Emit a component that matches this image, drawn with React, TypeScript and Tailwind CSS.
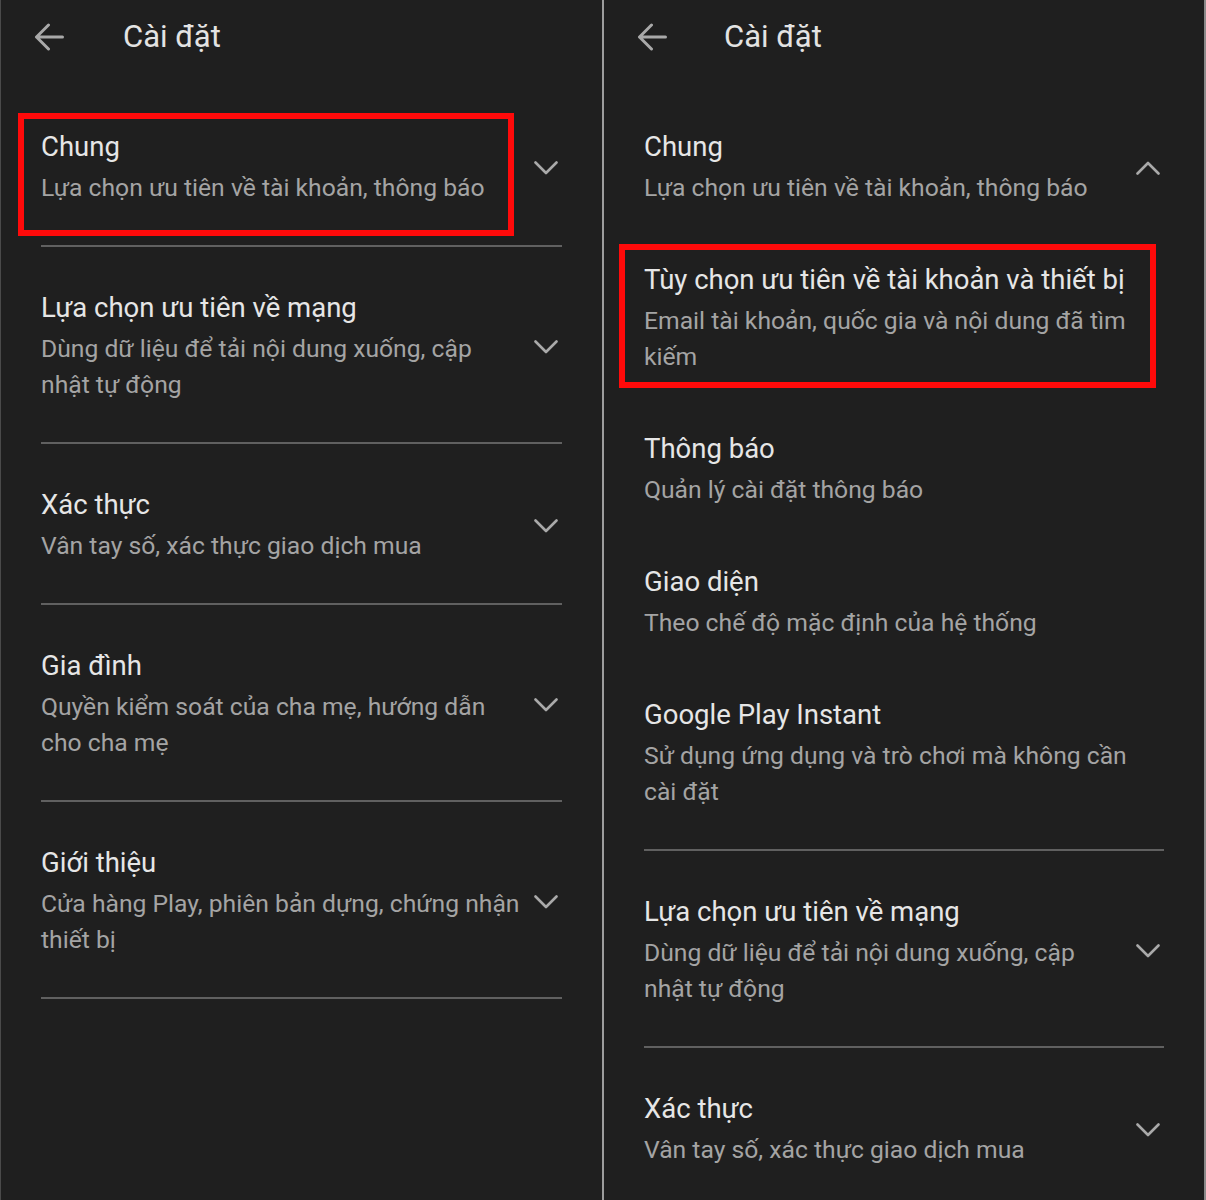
import React from "react";

type Entry = {
  title: string;
  sub: string[];
};

type Section = Entry & {
  expanded?: boolean;
  children?: Entry[];
};

const leftSections: Section[] = [
  { title: "Chung", sub: ["Lựa chọn ưu tiên về tài khoản, thông báo"] },
  {
    title: "Lựa chọn ưu tiên về mạng",
    sub: ["Dùng dữ liệu để tải nội dung xuống, cập", "nhật tự động"],
  },
  { title: "Xác thực", sub: ["Vân tay số, xác thực giao dịch mua"] },
  {
    title: "Gia đình",
    sub: ["Quyền kiểm soát của cha mẹ, hướng dẫn", "cho cha mẹ"],
  },
  {
    title: "Giới thiệu",
    sub: ["Cửa hàng Play, phiên bản dựng, chứng nhận", "thiết bị"],
  },
];

const rightSections: Section[] = [
  {
    title: "Chung",
    sub: ["Lựa chọn ưu tiên về tài khoản, thông báo"],
    expanded: true,
    children: [
      {
        title: "Tùy chọn ưu tiên về tài khoản và thiết bị",
        sub: ["Email tài khoản, quốc gia và nội dung đã tìm", "kiếm"],
      },
      { title: "Thông báo", sub: ["Quản lý cài đặt thông báo"] },
      { title: "Giao diện", sub: ["Theo chế độ mặc định của hệ thống"] },
      {
        title: "Google Play Instant",
        sub: ["Sử dụng ứng dụng và trò chơi mà không cần", "cài đặt"],
      },
    ],
  },
  {
    title: "Lựa chọn ưu tiên về mạng",
    sub: ["Dùng dữ liệu để tải nội dung xuống, cập", "nhật tự động"],
  },
  { title: "Xác thực", sub: ["Vân tay số, xác thực giao dịch mua"] },
];

/** Back arrow in the top bar */
function BackArrow() {
  return (
    <svg width="30" height="28" viewBox="0 0 30 28" fill="none" aria-hidden="true">
      <path
        d="M28.5 14H2.5M14.5 2L2.5 14L14.5 26"
        stroke="#a9a9a9"
        strokeWidth="3"
        strokeLinecap="round"
        strokeLinejoin="round"
      />
    </svg>
  );
}

/** Expand / collapse chevron */
function Chevron({ up }: { up?: boolean }) {
  return (
    <svg width="24" height="14" viewBox="0 0 24 14" fill="none" aria-hidden="true" className="mr-[4px] shrink-0">
      <path
        d={up ? "M1.5 12.5L12 2L22.5 12.5" : "M1.5 1.5L12 12L22.5 1.5"}
        stroke="#a9a9a9"
        strokeWidth="2.6"
        strokeLinecap="round"
        strokeLinejoin="round"
      />
    </svg>
  );
}

function EntryText({ entry }: { entry: Entry }) {
  return (
    <div className="min-w-0 flex-1">
      <div className="whitespace-nowrap text-[27.5px] leading-[36px] text-[#e6e6e6]">
        {entry.title}
      </div>
      <div className="mt-[5px] text-[24.7px] leading-[36px] text-[#a4a4a4]">
        {entry.sub.map((line) => (
          <div key={line} className="whitespace-nowrap">
            {line}
          </div>
        ))}
      </div>
    </div>
  );
}

function SectionRow({ section }: { section: Section }) {
  if (section.expanded) {
    return (
      <div className="border-b-2 border-[#606060] pb-[39px]">
        <div className="flex items-center pt-[43px]">
          <EntryText entry={section} />
          <Chevron up />
        </div>
        {section.children?.map((child) => (
          <div key={child.title} className="pt-[56px]">
            <EntryText entry={child} />
          </div>
        ))}
      </div>
    );
  }
  return (
    <div className="flex items-center border-b-2 border-[#606060] pb-[39px] pt-[43px]">
      <EntryText entry={section} />
      <Chevron />
    </div>
  );
}

function SettingsPanel({
  sections,
  highlight,
  titleGap,
  className,
}: {
  sections: Section[];
  highlight: string;
  titleGap: string;
  className: string;
}) {
  return (
    <div className={["relative h-full overflow-hidden bg-[#1f1f1f]", className].join(" ")}>
      {/* Top bar */}
      <div className="flex h-[74px] items-center pl-[33px]">
        <BackArrow />
        <span className={["text-[31px] leading-[40px] text-[#e3e3e3]", titleGap].join(" ")}>Cài đặt</span>
      </div>

      {/* Section list */}
      <div className="mt-[12px] px-[40px]">
        {sections.map((s) => (
          <SectionRow key={s.title} section={s} />
        ))}
      </div>

      {/* Red annotation box */}
      <div className={["pointer-events-none absolute border-[6px] border-[#ff0a0a]", highlight].join(" ")} />
    </div>
  );
}

export default function App() {
  return (
    <div
      className="flex h-[1200px] w-[1206px] overflow-hidden bg-[#1f1f1f]"
      style={{ fontFamily: "Roboto, 'Noto Sans', sans-serif" }}
    >
      <SettingsPanel
        sections={leftSections}
        highlight="left-[17px] top-[113px] h-[123px] w-[496px]"
        titleGap="ml-[59px]"
        className="w-[602px] border-l border-[#4a4a4a]"
      />
      <div className="h-full w-[2px] bg-[#9c9c9c]" />
      <SettingsPanel
        sections={rightSections}
        highlight="left-[15px] top-[244px] h-[144px] w-[537px]"
        titleGap="ml-[57px]"
        className="w-[600px]"
      />
      <div className="h-full w-[2px] bg-[#8a8a8a]" />
    </div>
  );
}
